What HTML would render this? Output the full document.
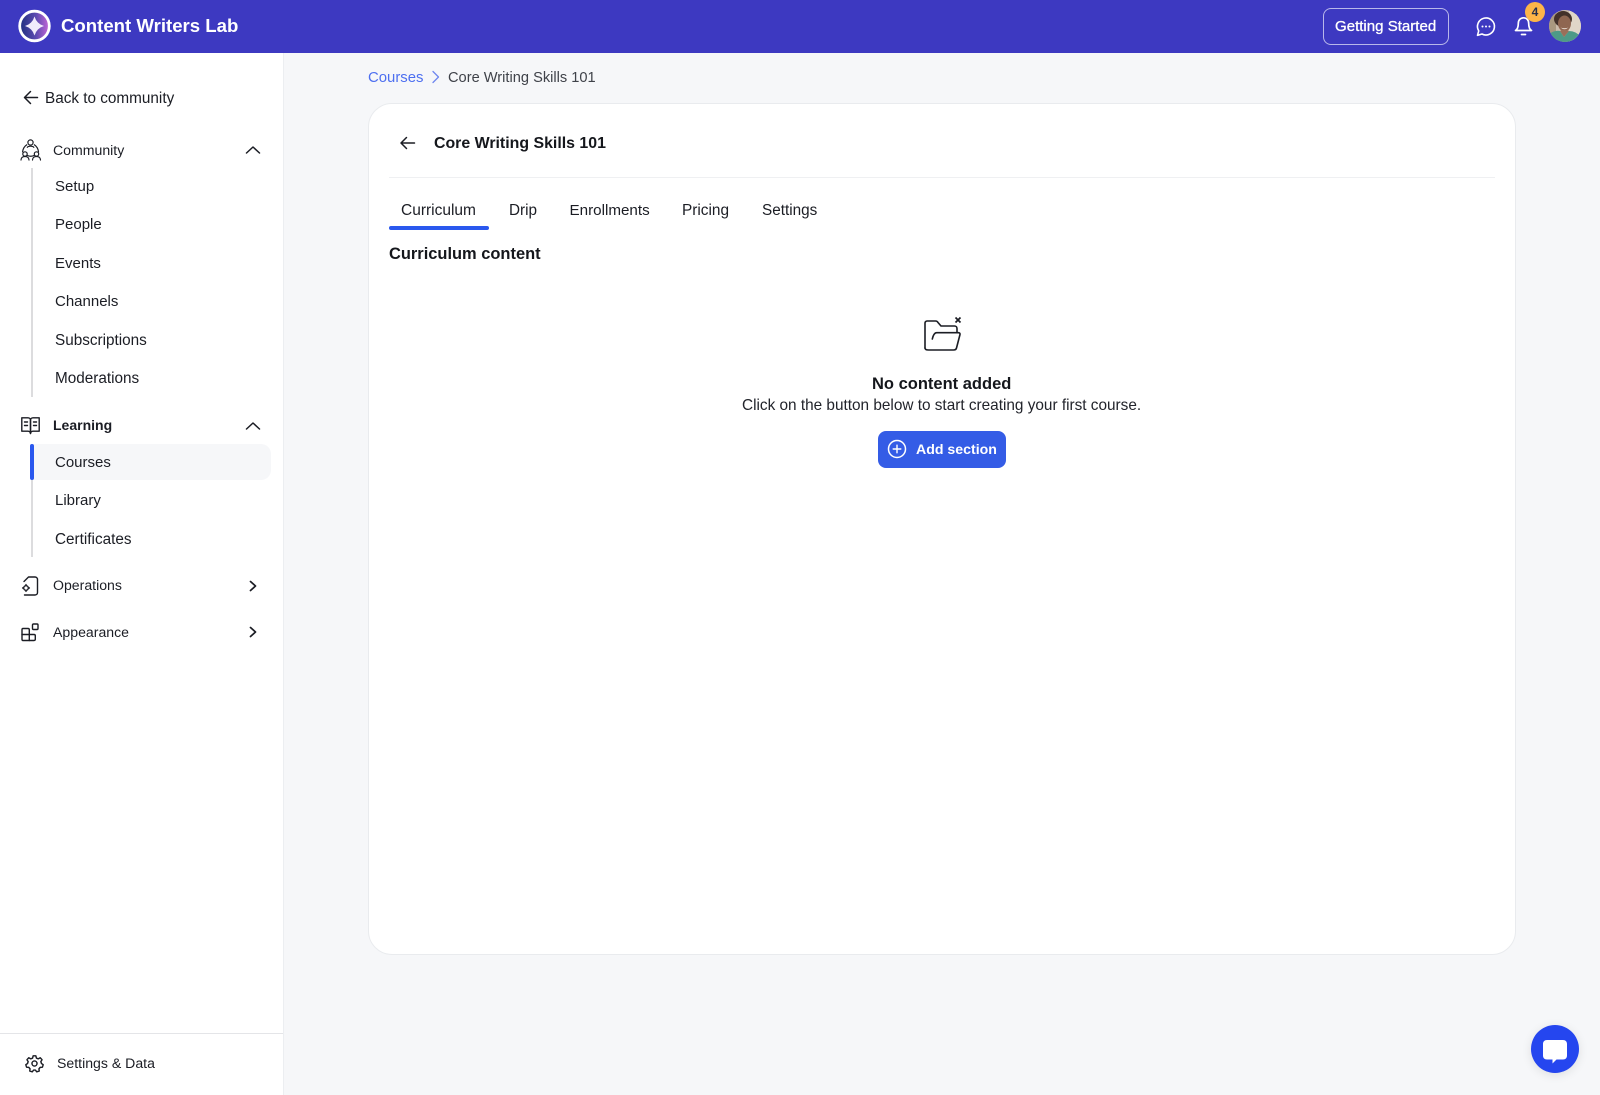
<!DOCTYPE html>
<html lang="en">
<head>
<meta charset="utf-8">
<title>Core Writing Skills 101</title>
<style>
html,body{margin:0;padding:0;width:1600px;height:1095px;overflow:hidden;background:#f6f7f9;font-family:"Liberation Sans",Arial,sans-serif;color:#1b1d24}
.t{position:absolute;white-space:nowrap;line-height:20px;font-size:15.3px}
.b{font-weight:700}
.box{position:absolute}
svg{position:absolute;overflow:visible}
.s{fill:none;stroke:#1b1d24;stroke-width:1.5;stroke-linecap:round;stroke-linejoin:round}
.w{fill:none;stroke:#fff;stroke-width:1.7;stroke-linecap:round;stroke-linejoin:round}
</style>
</head>
<body>
<!-- sidebar -->
<div class="box" style="left:0;top:52px;width:283px;height:1043px;background:#fff;border-right:1px solid #eceef1"></div>
<!-- header -->
<div class="box" style="left:0;top:0;width:1600px;height:53px;background:#3d39c1"></div>

<svg style="left:0;top:0" width="70" height="52" viewBox="0 0 70 52">
<defs><linearGradient id="lg" x1="0" x2="1" y1="0" y2="0"><stop offset="0" stop-color="#1f2f80"/><stop offset=".55" stop-color="#5c4ab0"/><stop offset="1" stop-color="#c766d8"/></linearGradient></defs>
<circle cx="34.500" cy="26" r="14.800" fill="url(#lg)" stroke="#fff" stroke-width="2.800"/>
<path d="M34.500 16.500Q36.700 23.800 44 26Q36.700 28.200 34.500 35.500Q32.300 28.200 25 26Q32.300 23.800 34.500 16.500Z" fill="#f1ebfb"/>
</svg>
<div class="t b" style="left:61px;top:16px;font-size:18.6px;color:#fff">Content Writers Lab</div>

<div class="box" style="left:1323px;top:8px;width:124px;height:35px;border:1px solid #b9b8ea;border-radius:8px"></div>
<div class="t" style="left:1335px;top:17px;font-size:15.050px;color:#fff;-webkit-text-stroke:.3px #fff">Getting Started</div>

<svg style="left:1470px;top:14px" width="32" height="26" viewBox="0 0 32 26">
<path class="w" d="M7.500 21.300L8.700 16.900A8.500 8.500 0 1 1 12 20Z" style="stroke-width:1.600"/>
<circle cx="12.500" cy="12.500" r="1" fill="#fff"/><circle cx="16" cy="12.500" r="1" fill="#fff"/><circle cx="19.500" cy="12.500" r="1" fill="#fff"/>
</svg>
<svg style="left:1510px;top:12px" width="28" height="28" viewBox="0 0 28 28">
<path class="w" d="M5.500 18.500C8 17 8.300 14.500 8.300 11.500C8.300 8 10.500 5.800 13.500 5.800C16.500 5.800 18.700 8 18.700 11.500C18.700 14.500 19 17 21.500 18.500Z"/>
<path class="w" d="M11.500 22.500H15.500"/>
</svg>
<div class="box" style="left:1525px;top:2px;width:20px;height:20px;border-radius:50%;background:#fdb548"></div>
<div class="t b" style="left:1525px;top:2px;width:20px;text-align:center;font-size:12px;color:#27304a">4</div>

<svg style="left:1549px;top:10px" width="32" height="32" viewBox="0 0 32 32">
<defs><clipPath id="av"><circle cx="16" cy="16" r="16"/></clipPath></defs>
<g clip-path="url(#av)">
<rect width="32" height="32" fill="#cbbcab"/>
<rect x="20" width="12" height="32" fill="#e0d6c8"/>
<rect x="0" y="0" width="7" height="32" fill="#a9987f"/>
<ellipse cx="14" cy="9" rx="9" ry="8" fill="#43312a"/>
<ellipse cx="15.500" cy="13.500" rx="6.500" ry="8" fill="#8f6651"/>
<path d="M11.500 17.500Q15.500 21 19.500 17.500Q15.500 19 11.500 17.500Z" fill="#efe3da"/>
<path d="M0 32V24Q6 20 11 21L15 27L20 21Q27 21 32 27V32Z" fill="#4e9a87"/>
<path d="M11 21L15 27L20 21L17 20H13Z" fill="#9a6f5a"/>
</g>
</svg>

<!-- sidebar content -->
<svg style="left:21.500px;top:88px" width="18" height="20" viewBox="0 0 18 20"><path class="s" d="M15.500 9.500H2.500M8.500 3.500L2.500 9.500L8.500 15.500"/></svg>
<div class="t" style="left:45px;top:89px">Back to community</div>

<svg style="left:20px;top:139px" width="22" height="22" viewBox="0 0 22 22" fill="none">
<g class="s" style="stroke-width:1.200">
<circle cx="10.500" cy="3.500" r="2.600"/>
<circle cx="5" cy="15" r="2.200"/>
<circle cx="16.500" cy="15" r="2.200"/>
<path d="M1 21C1 18.600 2.800 17.500 5 17.500C7.200 17.500 9 18.600 9 21M12.500 21C12.500 18.600 14.300 17.500 16.500 17.500C18.700 17.500 20.500 18.600 20.500 21"/>
<path d="M6.800 5.800C4.500 7.300 3 9.800 2.600 12.800M14.300 5.800C16.600 7.300 18.100 9.800 18.500 12.800M7.500 16.500Q10.700 18 14 16.500M7.300 8.300C8.200 6.800 12.900 6.800 13.800 8.300"/>
</g>
</svg>
<div class="t" style="left:53px;top:139.500px;font-size:14.1px">Community</div>
<svg style="left:244px;top:144px" width="18" height="12" viewBox="0 0 18 12"><path class="s" d="M2.500 9L9 3L15.500 9"/></svg>

<div class="box" style="left:31px;top:168px;width:2px;height:229px;background:#dcdcde"></div>
<div class="t" style="left:55px;top:177px;font-size:15px">Setup</div>
<div class="t" style="left:55px;top:215px;font-size:15px">People</div>
<div class="t" style="left:55px;top:254px;font-size:15px">Events</div>
<div class="t" style="left:55px;top:292px;font-size:15px">Channels</div>
<div class="t" style="left:55px;top:331px">Subscriptions</div>
<div class="t" style="left:55px;top:369px">Moderations</div>

<svg style="left:20px;top:416px" width="22" height="20" viewBox="0 0 22 20">
<g class="s" style="stroke-width:1.400">
<path d="M1.800 1.800H8C9.500 1.800 10.500 2.800 10.500 4.200V17.500C10.500 16.300 9.500 15.200 8 15.200H1.800Z"/>
<path d="M19.200 1.800H13C11.500 1.800 10.500 2.800 10.500 4.200V17.500C10.500 16.300 11.500 15.200 13 15.200H19.200Z"/>
<path d="M4.500 6H7.500M4.500 9.500H7.500M13.500 6H16.500M13.500 9.500H16.500"/>
</g>
</svg>
<div class="t b" style="left:53px;top:415px;font-size:14px">Learning</div>
<svg style="left:244px;top:420px" width="18" height="12" viewBox="0 0 18 12"><path class="s" d="M2.500 9L9 3L15.500 9"/></svg>

<div class="box" style="left:31px;top:444px;width:2px;height:113px;background:#dcdcde"></div>
<div class="box" style="left:32px;top:444px;width:239px;height:36px;background:#f6f7f9;border-radius:0 10px 10px 0"></div>
<div class="box" style="left:30px;top:444px;width:4px;height:36px;background:#2a58ee;border-radius:2px"></div>
<div class="t" style="left:55px;top:453px;font-size:15px">Courses</div>
<div class="t" style="left:55px;top:491px;font-size:15px">Library</div>
<div class="t" style="left:55px;top:530px">Certificates</div>

<svg style="left:20px;top:575px" width="22" height="22" viewBox="0 0 22 22">
<g class="s" style="stroke-width:1.400">
<path d="M4 6.500L8.500 2H15C16.500 2 17.500 3 17.500 4.500V17.500C17.500 19 16.500 20 15 20H4.500"/>
<circle cx="6" cy="13" r="2.300"/>
<path d="M6 9.600V10.400M6 15.600V16.400M2.600 13H3.400M8.600 13H9.400"/>
</g>
</svg>
<div class="t" style="left:53px;top:575px;font-size:14.1px">Operations</div>
<svg style="left:246px;top:577px" width="14" height="18" viewBox="0 0 14 18"><path class="s" d="M4.500 4.500L9.500 9L4.500 13.500" style="stroke-width:1.700"/></svg>

<svg style="left:20px;top:622px" width="22" height="22" viewBox="0 0 22 22">
<g class="s" style="stroke-width:1.400">
<path d="M3 6.500H8C8.800 6.500 9.300 7 9.300 7.800V18.500H3C2.200 18.500 2 18 2 17.300V7.800C2 7 2.200 6.500 3 6.500Z"/>
<path d="M2 12.500H14C14.800 12.500 15.300 13 15.300 13.800V17.300C15.300 18 14.800 18.500 14 18.500H9.300"/>
<rect x="12.500" y="2" width="5.500" height="5.500" rx="1"/>
</g>
</svg>
<div class="t" style="left:53px;top:622px;font-size:14.1px">Appearance</div>
<svg style="left:246px;top:623px" width="14" height="18" viewBox="0 0 14 18"><path class="s" d="M4.500 4.500L9.500 9L4.500 13.500" style="stroke-width:1.700"/></svg>

<div class="box" style="left:0;top:1033px;width:283px;height:1px;background:#e4e5e8"></div>
<svg style="left:25px;top:1054px" width="19" height="19" viewBox="0 0 24 24">
<g class="s" style="stroke-width:1.800">
<circle cx="12" cy="12" r="3.200"/>
<path d="M10.300 2.300H13.700L14.400 5.100L16.700 6.100L19.200 4.700L21.500 7.200L20 9.600L20.800 12L23 13.500L22 16.700L19.200 16.900L17.600 18.800L18 21.500L14.800 22.500L13.100 20.300H10.900L9.200 22.500L6 21.500L6.400 18.800L4.800 16.900L2 16.700L1 13.500L3.200 12L4 9.600L2.500 7.200L4.800 4.700L7.300 6.100L9.600 5.100Z"/>
</g>
</svg>
<div class="t" style="left:57px;top:1053px;font-size:14.1px">Settings &amp; Data</div>

<!-- breadcrumb -->
<div class="t" style="left:368px;top:67.500px;font-size:14.900px;color:#4d6ff0">Courses</div>
<svg style="left:430px;top:69px" width="12" height="16" viewBox="0 0 12 16"><path d="M3 2.500L8.500 8L3 13.500" fill="none" stroke="#6f86ee" stroke-width="1.300" stroke-linecap="round" stroke-linejoin="round"/></svg>
<div class="t" style="left:448px;top:67.500px;font-size:14.630px;color:#3f4249">Core Writing Skills 101</div>

<!-- card -->
<div class="box" style="left:368px;top:103px;width:1146px;height:850px;background:#fff;border:1px solid #e9ebee;border-radius:24px"></div>
<svg style="left:398px;top:133.500px" width="20" height="18" viewBox="0 0 20 18"><path class="s" d="M16.500 9H3M8.500 3.500L3 9L8.500 14.500"/></svg>
<div class="t b" style="left:434px;top:134px;font-size:15.900px;color:#15171c">Core Writing Skills 101</div>
<div class="box" style="left:389px;top:177px;width:1106px;height:1px;background:#eff0f2"></div>

<div class="t" style="left:401px;top:201px;font-size:15.500px">Curriculum</div>
<div class="t" style="left:509px;top:201px;font-size:15.300px">Drip</div>
<div class="t" style="left:569.500px;top:201px;font-size:15.200px">Enrollments</div>
<div class="t" style="left:682px;top:201px;font-size:15.400px">Pricing</div>
<div class="t" style="left:762px;top:201px;font-size:15.300px">Settings</div>
<div class="box" style="left:389px;top:226px;width:100px;height:4px;background:#2a58ee;border-radius:2px"></div>

<div class="t b" style="left:389px;top:243.500px;font-size:16.450px;color:#15171c">Curriculum content</div>

<svg style="left:920px;top:312px" width="44" height="42" viewBox="0 0 44 42">
<g class="s" style="stroke-width:1.600">
<path d="M5 36V11C5 10 6 9 7 9H15.500C16.500 9 17.500 9.500 18 10.500L21 14H34.500C36 14 37 15 37 16.500V20"/>
<path d="M12.300 27C13 24 14.500 20.700 16.700 20.700H38.500C39.700 20.700 40.200 21.500 40 22.500L36.500 36C36.200 37.200 35 38 33.500 38H8.500C6 38 5 37 5 36"/>
</g>
<path d="M35.500 5.500L40.500 10.500M40.500 5.500L35.500 10.500" fill="none" stroke="#1b1d24" stroke-width="1.700"/>
</svg>

<div class="t b" style="left:872px;top:373.500px;font-size:16.500px;color:#15171c">No content added</div>
<div class="t" style="left:742px;top:395.500px;font-size:15.350px;color:#22242b">Click on the button below to start creating your first course.</div>

<div class="box" style="left:878px;top:431px;width:128px;height:37px;background:#345ce6;border-radius:8px"></div>
<svg style="left:886px;top:438px" width="22" height="22" viewBox="0 0 22 22"><circle cx="11" cy="11" r="8.500" class="w" style="stroke-width:1.500"/><path class="w" d="M11 7.200V14.800M7.200 11H14.800" style="stroke-width:1.400"/></svg>
<div class="t b" style="left:916px;top:439px;font-size:14.150px;color:#fff">Add section</div>

<!-- chat widget -->
<div class="box" style="left:1531px;top:1025px;width:48px;height:48px;border-radius:50%;background:#2546ef;box-shadow:0 2px 10px rgba(0,0,0,.10)"></div>
<svg style="left:1541px;top:1036px" width="28" height="28" viewBox="0 0 28 28"><path d="M6 4H22C24.500 4 26 5.500 26 8V19.500C26 22 24.500 23.500 22 23.500H15.500L11.500 27.500V23.500H6C3.500 23.500 2 22 2 19.500V8C2 5.500 3.500 4 6 4Z" fill="#fff"/></svg>
</body>
</html>
